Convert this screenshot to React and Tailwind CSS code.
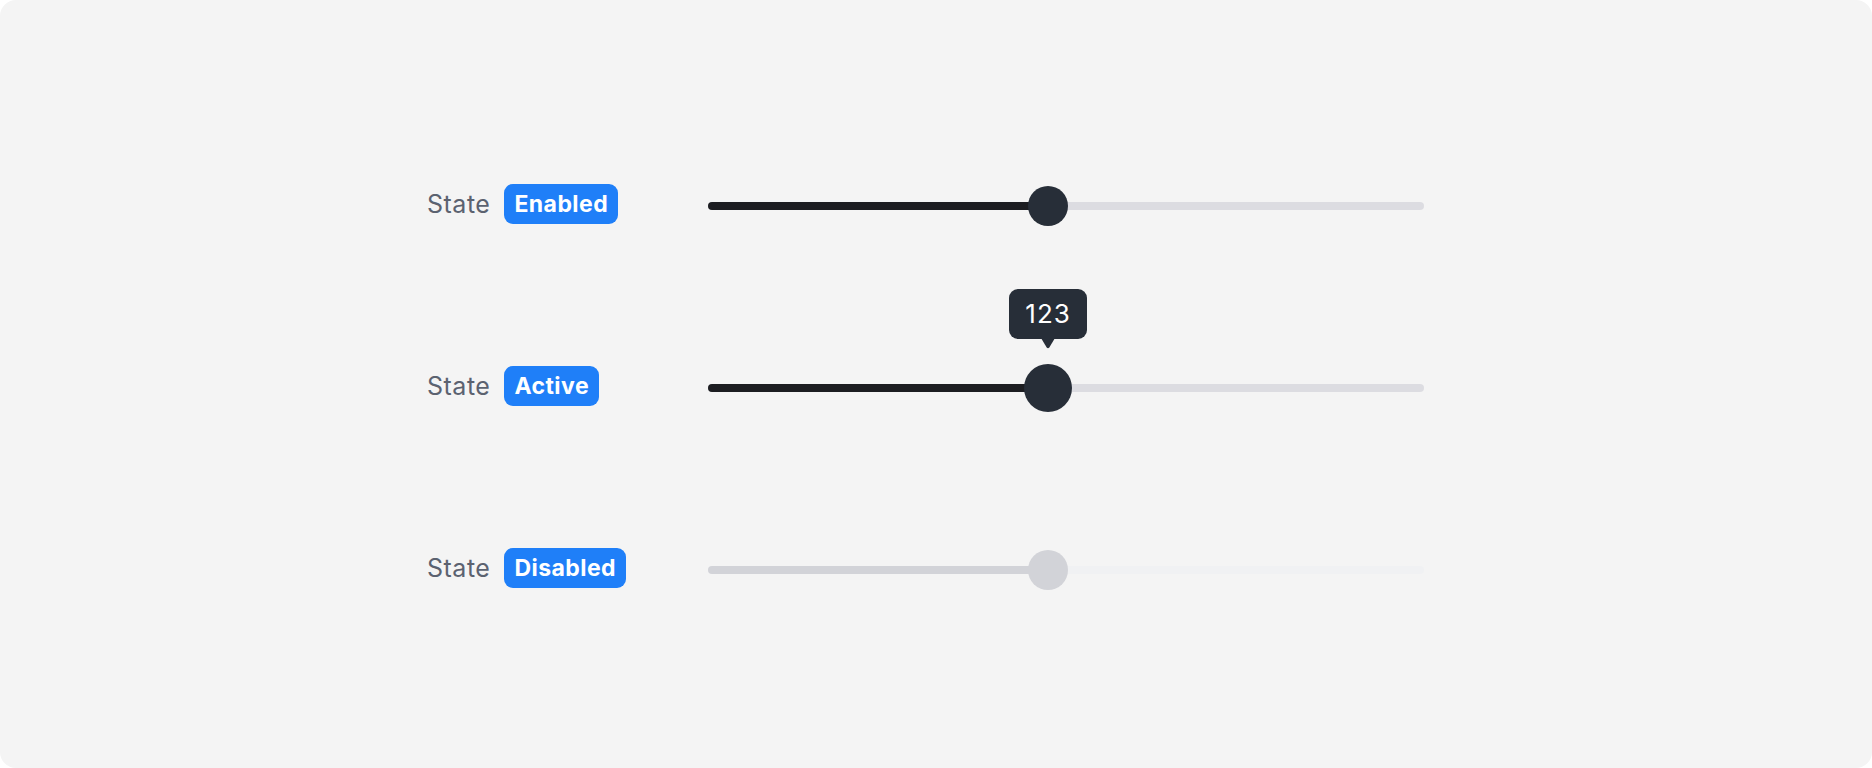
import React from "react";
import clsx from "clsx";

// Sliders in three states: enabled, active (with value tooltip) and disabled
const rows = [
  { state: "enabled", label: "Enabled", value: 47.5 },
  { state: "active", label: "Active", value: 47.5 },
  { state: "disabled", label: "Disabled", value: 47.5 },
];

const Tooltip = ({ children }) => (
  <div className="absolute bottom-[39px] left-0 flex -translate-x-1/2 flex-col items-center">
    <div className="flex h-[50px] w-[78px] items-center justify-center rounded-[9px] bg-[#272e38] text-[26px] leading-none tracking-[0.04em] text-white">
      {children}
    </div>
    <svg width="14" height="11" viewBox="0 0 14 11" className="-mt-px block">
      <path d="M0 0 H14 L8.3 9.4 Q7 11 5.7 9.4 Z" fill="#272e38" />
    </svg>
  </div>
);

const Slider = ({ value, state }) => {
  const disabled = state === "disabled";
  const active = state === "active";

  return (
    <div className="relative flex h-12 w-[716px] items-center">
      <div
        className={clsx(
          "h-2 w-full rounded-full",
          disabled ? "bg-[#f0f1f3]" : "bg-[#dcdce1]"
        )}
      >
        <div
          className={clsx(
            "h-2 rounded-full",
            disabled ? "bg-[#d2d3d8]" : "bg-[#1c1d21]"
          )}
          style={{ width: `${value}%` }}
        />
      </div>
      {/* thumb anchor sits on the track centre line */}
      <div className="absolute top-1/2 h-0 w-0" style={{ left: `${value}%` }}>
        <div
          className={clsx(
            "absolute left-0 top-0 -translate-x-1/2 -translate-y-1/2 rounded-full",
            active ? "h-12 w-12" : "h-10 w-10",
            disabled ? "bg-[#d2d3d8]" : "bg-[#272e38]"
          )}
        />
        {active && <Tooltip>123</Tooltip>}
      </div>
    </div>
  );
};

const StateRow = ({ row }) => (
  <div className="flex h-12 items-center">
    <div className="flex w-[281px] items-center gap-[14px] pb-1">
      <span className="text-[25px] leading-none tracking-[0.02em] text-[#5b6270]">State</span>
      <span className="flex h-[40px] items-center rounded-[9px] bg-[#1f7ff8] px-[10px] text-[23px] font-bold leading-none tracking-[0.02em] text-white">
        {row.label}
      </span>
    </div>
    <Slider value={row.value} state={row.state} />
  </div>
);

export default function App() {
  return (
    <div className="h-[768px] w-full bg-white font-['Inter',sans-serif]">
      <div className="flex h-full flex-col gap-[134px] rounded-[16px] bg-[#f4f4f4] pl-[427px] pt-[182px]">
        {rows.map((row) => (
          <StateRow key={row.state} row={row} />
        ))}
      </div>
    </div>
  );
}
